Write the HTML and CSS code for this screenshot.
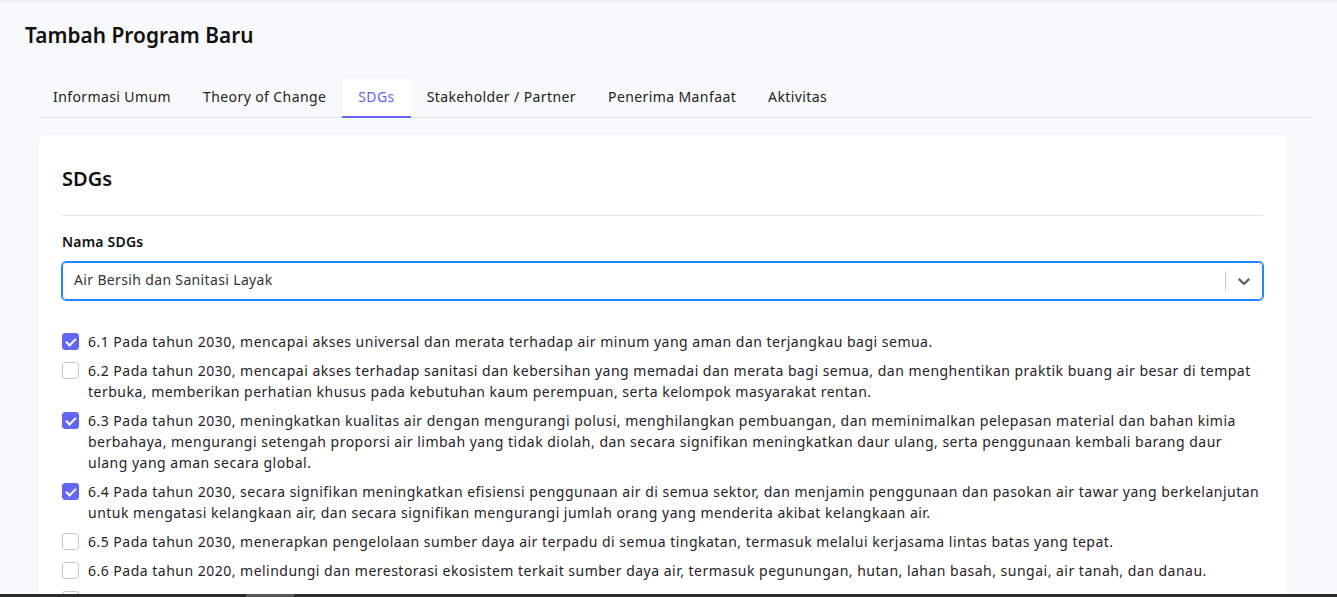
FILE: index.html
```html
<!DOCTYPE html>
<html lang="id">
<head>
<meta charset="utf-8">
<title>Tambah Program Baru</title>
<link rel="stylesheet" href="styles.css">
</head>
<body>
<div class="page">
  <h1 class="page-title">Tambah Program Baru</h1>
  <nav class="tabs">
    <a class="tab">Informasi Umum</a>
    <a class="tab">Theory of Change</a>
    <a class="tab active">SDGs</a>
    <a class="tab">Stakeholder / Partner</a>
    <a class="tab">Penerima Manfaat</a>
    <a class="tab">Aktivitas</a>
  </nav>
  <section class="card">
    <h2 class="card-title">SDGs</h2>
    <label class="field-label">Nama SDGs</label>
    <div class="select">
      <div class="select-value">Air Bersih dan Sanitasi Layak</div>
      <span class="select-sep"></span>
      <span class="select-indicator">
        <svg viewBox="0 0 20 20" width="20" height="20"><path fill="currentColor" d="M4.516 7.548c0.436-0.446 1.043-0.481 1.576 0l3.908 3.747 3.908-3.747c0.533-0.481 1.141-0.446 1.574 0 0.436 0.445 0.408 1.197 0 1.615-0.406 0.418-4.695 4.502-4.695 4.502-0.217 0.223-0.502 0.335-0.787 0.335s-0.57-0.112-0.789-0.335c0 0-4.287-4.084-4.695-4.502s-0.436-1.170 0-1.615z"/></svg>
      </span>
    </div>
    <ul class="targets">
      <li class="target"><span class="cb checked"></span><span class="target-text">6.1 Pada tahun 2030, mencapai akses universal dan merata terhadap air minum yang aman dan terjangkau bagi semua.</span></li>
      <li class="target"><span class="cb"></span><span class="target-text">6.2 Pada tahun 2030, mencapai akses terhadap sanitasi dan kebersihan yang memadai dan merata bagi semua, dan menghentikan praktik buang air besar di tempat terbuka, memberikan perhatian khusus pada kebutuhan kaum perempuan, serta kelompok masyarakat rentan.</span></li>
      <li class="target"><span class="cb checked"></span><span class="target-text">6.3 Pada tahun 2030, meningkatkan kualitas air dengan mengurangi polusi, menghilangkan pembuangan, dan meminimalkan pelepasan material dan bahan kimia berbahaya, mengurangi setengah proporsi air limbah yang tidak diolah, dan secara signifikan meningkatkan daur ulang, serta penggunaan kembali barang daur ulang yang aman secara global.</span></li>
      <li class="target"><span class="cb checked"></span><span class="target-text">6.4 Pada tahun 2030, secara signifikan meningkatkan efisiensi penggunaan air di semua sektor, dan menjamin penggunaan dan pasokan air tawar yang berkelanjutan untuk mengatasi kelangkaan air, dan secara signifikan mengurangi jumlah orang yang menderita akibat kelangkaan air.</span></li>
      <li class="target"><span class="cb"></span><span class="target-text">6.5 Pada tahun 2030, menerapkan pengelolaan sumber daya air terpadu di semua tingkatan, termasuk melalui kerjasama lintas batas yang tepat.</span></li>
      <li class="target"><span class="cb"></span><span class="target-text">6.6 Pada tahun 2020, melindungi dan merestorasi ekosistem terkait sumber daya air, termasuk pegunungan, hutan, lahan basah, sungai, air tanah, dan danau.</span></li>
      <li class="target"><span class="cb"></span><span class="target-text">6.a Pada tahun 2030, memperluas kerjasama internasional dan dukungan pengembangan kapasitas bagi negara berkembang, dalam program dan kegiatan terkait air dan sanitasi, termasuk pemanenan air, desalinasi, efisiensi air, penanganan limbah, daur ulang dan teknologi daur ulang.</span></li>
    </ul>
  </section>
</div>
<div class="hscroll"><span class="hscroll-thumb"></span></div>
</body>
</html>
```

FILE: styles.css
```css
* { box-sizing: border-box; }
html, body { margin: 0; padding: 0; }
body {
  background: #f8f9fb;
  font-family: "Noto Sans", Inter, sans-serif;
  color: #212529;
  height: 597px;
  overflow: hidden;
  box-shadow: inset 0 4px 4px -3px rgba(0,0,0,0.06);
}
.page {
  padding: 23px 25px 0 0;
}
.page-title {
  margin: 0 0 32px 25px;
  font-size: 20.8px;
  line-height: 24px;
  font-weight: 600;
  color: #111;
  letter-spacing: 0.05px;
}
.tabs {
  display: flex;
  margin-left: 37px;
  border-bottom: 1px solid #dee2e6;
}
.tab {
  display: block;
  padding: 0 16px;
  height: 39px;
  line-height: 36px;
  font-size: 14px;
  color: #222;
  border-bottom: 2px solid transparent;
  border-radius: 4px 4px 0 0;
  margin-bottom: -1px;
  letter-spacing: 0.4px;
}
.tab.active {
  background: #fff;
  color: #6366f1;
  border-bottom-color: #6366f1;
}
.card {
  margin: 17px 25px 0 38px;
  background: #fff;
  border-radius: 6px;
  box-shadow: 0 0 3px rgba(0,0,0,0.04);
  padding: 0 24px 24px;
  height: 470px;
}
.card-title {
  margin: 0;
  padding: 29px 0 21px;
  font-size: 20px;
  line-height: 30px;
  font-weight: 600;
  color: #111;
  border-bottom: 1px solid #e5e7eb;
}
.field-label {
  display: block;
  margin-top: 16px;
  font-size: 14px;
  line-height: 20px;
  font-weight: 600;
  color: #111;
  letter-spacing: 0.2px;
}
.select {
  margin-top: 10px;
  display: flex;
  align-items: center;
  height: 38px;
  border: 1px solid #2684ff;
  box-shadow: 0 0 0 1px #2684ff;
  border-radius: 4px;
}
.select-value {
  flex: 1;
  padding: 0 10px 0 11px;
  font-size: 14px;
  color: #333;
  letter-spacing: 0.35px;
  line-height: 20px;
  margin-top: -2px;
}
.select-sep {
  width: 1px;
  height: 20px;
  background: #ccc;
}
.select-indicator {
  display: flex;
  padding: 8px;
  color: #666;
}
.targets {
  list-style: none;
  margin: 31px 0 0;
  padding: 0;
  display: flex;
  flex-direction: column;
  gap: 8px;
}
.target {
  display: flex;
  align-items: flex-start;
  font-size: 14px;
  line-height: 21px;
}
.cb {
  flex: none;
  width: 17px;
  height: 17px;
  margin: 2px 9px 0 0;
  border: 1px solid #c8c8c8;
  border-radius: 3px;
  background: #fff;
  position: relative;
}
.cb.checked {
  background: #6366f1;
  border-color: #6366f1;
}
.cb.checked::after {
  content: "";
  position: absolute;
  left: 5px;
  top: 2px;
  width: 4px;
  height: 8px;
  border: solid #fff;
  border-width: 0 2px 2px 0;
  transform: rotate(45deg);
}
.target-text {
  flex: 1;
  color: #1f2328;
  letter-spacing: 0.49px;
}
.hscroll {
  position: fixed;
  left: 0;
  right: 0;
  bottom: 0;
  height: 3px;
  background: #2b2b2b;
}
.hscroll-thumb {
  position: absolute;
  left: 246px;
  width: 48px;
  top: 0;
  bottom: 0;
  background: #5a5a5a;
}
```
